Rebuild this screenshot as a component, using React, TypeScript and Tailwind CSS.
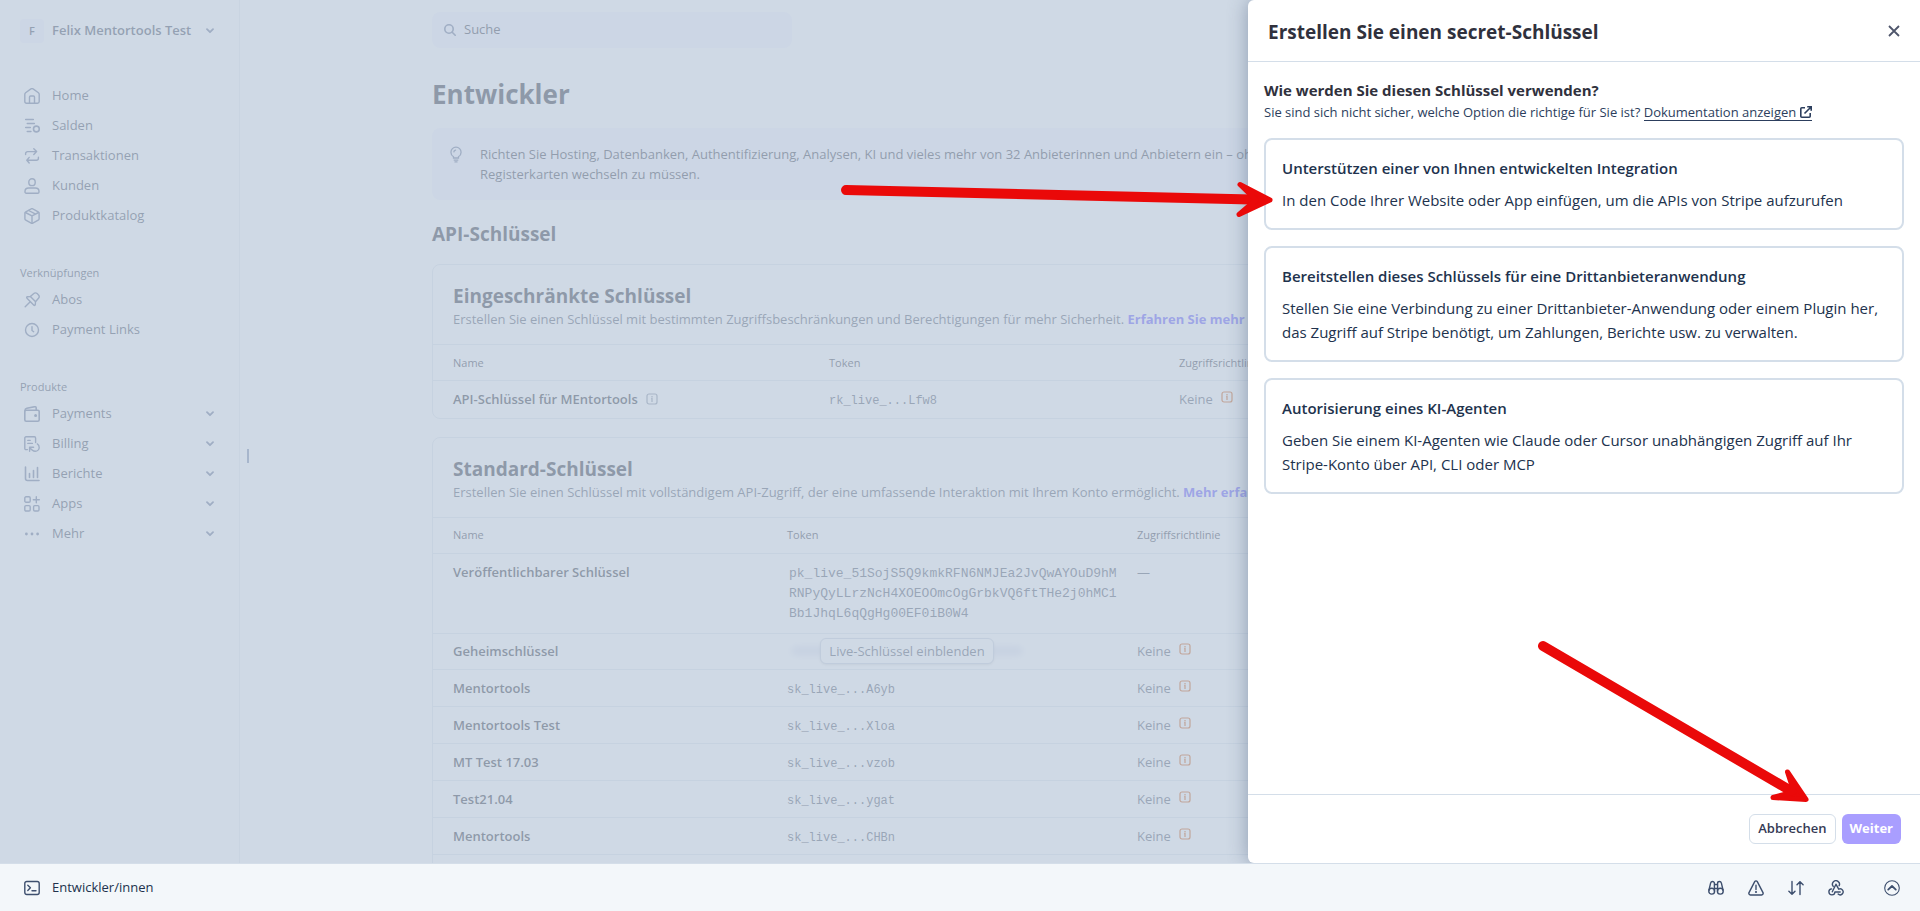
import type { ReactNode } from "react";

const Icon = ({ children, size = 16 }: { children: ReactNode; size?: number }) => (
  <svg
    width={size}
    height={size}
    viewBox="0 0 16 16"
    fill="none"
    stroke="currentColor"
    strokeWidth="1.4"
    strokeLinecap="round"
    strokeLinejoin="round"
    className="shrink-0"
    aria-hidden="true"
  >
    {children}
  </svg>
);

const icons = {
  home: (
    <Icon>
      <path d="M.8 6.2c0-.6.3-1.100.8-1.500L6.900.9c.6-.5 1.600-.5 2.200 0l5.300 3.800c.5.4.8.9.8 1.500v7.300c0 1-.8 1.700-1.700 1.700h-11c-1 0-1.700-.8-1.700-1.700z" />
      <path d="M5.500 15V9c0-.6.4-1 1-1h3c.6 0 1 .4 1 1v6" />
    </Icon>
  ),
  balances: (
    <Icon>
      <path d="M1.700 1.500h7.600M3.300 5.500h7M1.700 9.500h4.600M3.300 13.500h3.600" strokeWidth="1.600" />
      <circle cx="12.400" cy="11" r="2.900" strokeWidth="1.600" />
    </Icon>
  ),
  transactions: (
    <Icon>
      <path d="M9.800.8 12.600 3.600 9.800 6.400M12.400 3.600H3.600c-1.100 0-2 .9-2 2v1" />
      <path d="M5.200 9.400 2.800 12.200l2.400 2.800M3 12.200h9.400c1.100 0 2-.9 2-2v-1" />
    </Icon>
  ),
  customers: (
    <Icon>
      <rect x="4.800" y=".8" width="6.400" height="6.800" rx="3.200" />
      <path d="M1 13.400c0-2.100 1.700-3.400 3.700-3.400h6.600c2 0 3.700 1.300 3.700 3.400v.6c0 .7-.5 1.200-1.200 1.200H2.200c-.7 0-1.200-.5-1.200-1.200z" />
    </Icon>
  ),
  products: (
    <Icon>
      <path d="M7.200.9c.5-.3 1.100-.3 1.600 0l5.400 3c.6.3.9.8.9 1.400v5.400c0 .6-.3 1.100-.9 1.400l-5.400 3c-.5.3-1.100.3-1.600 0l-5.400-3c-.6-.3-.9-.8-.9-1.400V5.300c0-.6.3-1.100.9-1.400z" />
      <path d="M1.400 4.500 8 7.800l6.600-3.300M8 7.800V15M4.600 2.500l6.600 3.400" />
    </Icon>
  ),
  pin: (
    <Icon>
      <path d="M1.200 14.800 6 10M3 6.200l6.900 7c.5.5 1.300.2 1.400-.5l.2-3 3-3.400c.9-1 .9-2.300 0-3.300l-1.400-1.400c-1-1-2.400-.9-3.300 0L6.400 4.600l-3 .2c-.8.100-1 .9-.4 1.400z" />
      <path d="M6.400 4.600l5 5" />
    </Icon>
  ),
  clock: (
    <Icon>
      <circle cx="8" cy="8" r="6.500" />
      <path d="M8 4.600v3.900l1.700 1.200" />
    </Icon>
  ),
  wallet: (
    <Icon>
      <rect x=".8" y="4.200" width="14.400" height="11" rx="1.400" strokeWidth="1.600" />
      <path d="M1 4.400c0-1.100.7-2 1.800-2.200l7.900-1.500c.8-.1 1.500.4 1.500 1.200V4" strokeWidth="1.600" />
      <circle cx="11.600" cy="9.600" r=".8" fill="currentColor" />
    </Icon>
  ),
  billing: (
    <Icon>
      <path d="M3.400 13.600H2c-.7 0-1.200-.5-1.200-1.200V2c0-.7.5-1.200 1.200-1.200h8.400c.7 0 1.200.5 1.200 1.200v4.600M3.800 4.400h2.400M3.800 7.400h4.600" />
      <path d="M5.600 15.200v-4h4M5.800 11.400c1.400 2.400 3.200 3.800 5.400 3.800 2.300 0 4-1.700 4-3.800 0-1.500-.7-2.800-1.900-3.500" />
    </Icon>
  ),
  reports: (
    <Icon>
      <path d="M1.500 1v11.500c0 1.100.9 2 2 2H15M5.500 7.500v4M9.500 4.500v7M13.500 1.500v10" strokeWidth="1.600" />
    </Icon>
  ),
  apps: (
    <Icon>
      <rect x=".8" y=".8" width="5.400" height="5.400" rx="1.200" />
      <rect x=".8" y="9.600" width="5.400" height="5.400" rx="1.200" />
      <rect x="9.600" y="9.600" width="5.400" height="5.400" rx="1.200" />
      <path d="M12.300.8v6M9.300 3.800h6" />
    </Icon>
  ),
  more: (
    <Icon>
      <g fill="currentColor" stroke="none">
        <circle cx="2.400" cy="8" r="1.400" />
        <circle cx="8" cy="8" r="1.400" />
        <circle cx="13.600" cy="8" r="1.400" />
      </g>
    </Icon>
  ),
};

const Chevron = () => (
  <svg width="8" height="6" viewBox="0 0 8 6" fill="none" stroke="currentColor" strokeWidth="1.800" strokeLinecap="round" strokeLinejoin="round" className="text-[#6c7a99]" aria-hidden="true">
    <path d="M1 1.200l3 3 3-3" />
  </svg>
);

const InfoIcon = () => (
  <svg width="12" height="12" viewBox="0 0 12 12" fill="none" stroke="currentColor" aria-hidden="true">
    <rect x="1" y="1" width="10" height="10" rx="2" strokeWidth="1.200" />
    <path d="M6 3v1.400M5.200 5.600H6V9" strokeWidth="1.200" />
  </svg>
);

const NavItem = ({ icon, label, expandable }: { icon: ReactNode; label: string; expandable?: boolean }) => (
  <li>
    <a href="#" className="flex h-[30px] items-center pr-[5px] pl-1">
      <span className="text-[#6c7a99]">{icon}</span>
      <span className="ml-3 flex-1">{label}</span>
      {expandable && <Chevron />}
    </a>
  </li>
);

const Sidebar = () => (
  <aside className="relative w-60 shrink-0 border-r border-[#ebeef1] px-5 pt-[19px] text-[13px] text-[#4a5163]">
    <button type="button" className="flex h-6 w-full items-center pr-[5px]">
      <span className="flex size-6 items-center justify-center rounded bg-[#f5f4fd] text-[11px] font-semibold">F</span>
      <span className="ml-2 flex-1 text-left font-semibold">Felix Mentortools Test</span>
      <Chevron />
    </button>
    <nav>
      <ul className="mt-[38px]">
        <NavItem icon={icons.home} label="Home" />
        <NavItem icon={icons.balances} label="Salden" />
        <NavItem icon={icons.transactions} label="Transaktionen" />
        <NavItem icon={icons.customers} label="Kunden" />
        <NavItem icon={icons.products} label="Produktkatalog" />
      </ul>
      <h2 className="mt-8 mb-0.5 text-[11px] leading-5">Verknüpfungen</h2>
      <ul>
        <NavItem icon={icons.pin} label="Abos" />
        <NavItem icon={icons.clock} label="Payment Links" />
      </ul>
      <h2 className="mt-8 mb-0.5 text-[11px] leading-5">Produkte</h2>
      <ul>
        <NavItem icon={icons.wallet} label="Payments" expandable />
        <NavItem icon={icons.billing} label="Billing" expandable />
        <NavItem icon={icons.reports} label="Berichte" expandable />
        <NavItem icon={icons.apps} label="Apps" expandable />
        <NavItem icon={icons.more} label="Mehr" expandable />
      </ul>
    </nav>
    {/* resize handle */}
    <div className="absolute top-[52%] -right-2.5 h-3.5 w-0.5 bg-[#8391b0]" />
  </aside>
);

const CardHead = ({ title, text, link }: { title: string; text: string; link: string }) => (
  <div className="h-[79px] px-5 pt-[18px]">
    <h3 className="text-[19px] leading-[26px] font-bold text-[#353a44]">{title}</h3>
    <p className="text-[13px] leading-5 whitespace-nowrap text-[#596171]">
      {text}{" "}
      <a href="#" className="font-bold text-[#675dff]">
        {link}
      </a>
    </p>
  </div>
);

const NoPolicy = () => (
  <span className="flex gap-2 text-[#596171]">
    Keine
    <span className="mt-0.5 text-[#d2601a]">
      <InfoIcon />
    </span>
  </span>
);

const secretKeys = [
  { name: "Mentortools", token: "sk_live_...A6yb" },
  { name: "Mentortools Test", token: "sk_live_...Xloa" },
  { name: "MT Test 17.03", token: "sk_live_...vzob" },
  { name: "Test21.04", token: "sk_live_...ygat" },
  { name: "Mentortools", token: "sk_live_...CHBn" },
];

const cardClass = "overflow-hidden rounded-lg border border-[#e3e8ee]";
const headRowClass = "h-9 border-y border-[#e3e8ee] text-left text-[11px] text-[#414552]";
const mono = "pt-1 font-['Liberation_Mono',monospace] text-[12px] text-[#596171]";

const RestrictedKeys = () => (
  <section className={cardClass}>
    <CardHead
      title="Eingeschränkte Schlüssel"
      text="Erstellen Sie einen Schlüssel mit bestimmten Zugriffsbeschränkungen und Berechtigungen für mehr Sicherheit."
      link="Erfahren Sie mehr"
    />
    <table className="w-full table-fixed text-[13px] leading-5">
      <thead>
        <tr className={headRowClass}>
          <th className="w-[396px] pl-5 font-medium">Name</th>
          <th className="w-[350px] font-medium">Token</th>
          <th className="font-medium">Zugriffsrichtlinie</th>
        </tr>
      </thead>
      <tbody>
        <tr className="h-[37px]">
          <td className="pl-5 font-semibold text-[#353a44]">
            <span className="flex items-center gap-2">
              API-Schlüssel für MEntortools
              <span className="text-[#8792a2]">
                <InfoIcon />
              </span>
            </span>
          </td>
          <td className={mono}>rk_live_...Lfw8</td>
          <td>
            <NoPolicy />
          </td>
        </tr>
      </tbody>
    </table>
  </section>
);

const StandardKeys = () => (
  <section className={cardClass}>
    <CardHead
      title="Standard-Schlüssel"
      text="Erstellen Sie einen Schlüssel mit vollständigem API-Zugriff, der eine umfassende Interaktion mit Ihrem Konto ermöglicht."
      link="Mehr erfahren"
    />
    <table className="w-full table-fixed text-[13px] leading-5">
      <thead>
        <tr className={headRowClass}>
          <th className="w-[354px] pl-5 font-medium">Name</th>
          <th className="w-[350px] font-medium">Token</th>
          <th className="font-medium">Zugriffsrichtlinie</th>
        </tr>
      </thead>
      <tbody>
        <tr className="h-20 border-b border-[#e3e8ee] align-top">
          <td className="pt-2 pl-5 font-semibold text-[#353a44]">Veröffentlichbarer Schlüssel</td>
          <td className="pt-2.5 pr-4 pl-0.5 font-['Liberation_Mono',monospace] text-[13px] leading-5 break-all text-[#596171]">
            pk_live_51SojS5Q9kmkRFN6NMJEa2JvQwAYOuD9hMRNPyQyLLrzNcH4XOEOOmcOgGrbkVQ6ftTHe2j0hMC1Bb1JhqL6qQgHg00EF0iB0W4
          </td>
          <td className="pt-2 text-[#596171]">—</td>
        </tr>
        <tr className="h-9 border-b border-[#e3e8ee]">
          <td className="pl-5 font-semibold text-[#353a44]">Geheimschlüssel</td>
          <td>
            <div className="relative flex w-60 justify-center">
              <div className="absolute inset-x-1 inset-y-2 rounded-full bg-[#c4c8e4] opacity-40 blur-[3px]" />
              <button
                type="button"
                className="relative h-[26px] rounded-md border border-[#d0d6e2] bg-white px-2 text-[13px] font-medium whitespace-nowrap text-[#596171] shadow-sm"
              >
                Live-Schlüssel einblenden
              </button>
            </div>
          </td>
          <td>
            <NoPolicy />
          </td>
        </tr>
        {secretKeys.map((key) => (
          <tr key={key.token} className="h-[37px] border-b border-[#e3e8ee]">
            <td className="pl-5 font-semibold text-[#353a44]">{key.name}</td>
            <td className={mono}>{key.token}</td>
            <td>
              <NoPolicy />
            </td>
          </tr>
        ))}
      </tbody>
    </table>
    <div className="h-9" />
  </section>
);

const Content = () => (
  <main className="min-w-0 flex-1">
    <div className="mx-auto max-w-[1296px] pt-3">
      <label className="flex h-9 w-[360px] items-center gap-2 rounded-lg bg-[#f5f5fd] px-3 text-[#6c7a99]">
        <svg width="12" height="12" viewBox="0 0 12 12" fill="none" stroke="currentColor" strokeWidth="1.600" strokeLinecap="round" aria-hidden="true">
          <circle cx="5" cy="5" r="4.200" />
          <path d="M8.200 8.200 11.200 11.200" />
        </svg>
        <input
          type="search"
          aria-label="Suche"
          placeholder="Suche"
          className="flex-1 bg-transparent text-[13px] outline-none placeholder:text-[#414552]"
        />
      </label>
      <h1 className="mt-[26px] text-[26px] leading-10 font-bold text-[#353a44]">Entwickler</h1>
      <div className="mt-[14px] flex gap-[18px] rounded-lg bg-[#f5f5fd] py-4 pr-4 pl-[18px] text-[#414552]">
        <svg width="12" height="17" viewBox="0 0 13 18" fill="none" stroke="currentColor" strokeWidth="1.400" strokeLinecap="round" className="mt-0.5 shrink-0 text-[#6c7a99]" aria-hidden="true">
          <path d="M3.800 11.500C2 10.300 1 8.600 1 6.500A5.500 5.500 0 0 1 6.500 1 5.500 5.500 0 0 1 12 6.500c0 2.100-1 3.800-2.800 5v1.300H3.800zM4.500 15h4M5.400 17h2.200M4.200 6.200c.1-1 .8-1.700 1.800-1.900" />
        </svg>
        <p className="h-10 text-[13px] leading-5">
          Richten Sie Hosting, Datenbanken, Authentifizierung, Analysen, KI und vieles mehr von 32 Anbieterinnen und Anbietern ein – ohne zwischen
          <br />
          Registerkarten wechseln zu müssen.
        </p>
      </div>
      <h2 className="mt-5 text-[19px] leading-7 font-bold text-[#353a44]">API-Schlüssel</h2>
      <div className="mt-4 flex flex-col gap-[18px]">
        <RestrictedKeys />
        <StandardKeys />
      </div>
    </div>
  </main>
);

const options = [
  {
    title: "Unterstützen einer von Ihnen entwickelten Integration",
    text: "In den Code Ihrer Website oder App einfügen, um die APIs von Stripe aufzurufen",
  },
  {
    title: "Bereitstellen dieses Schlüssels für eine Drittanbieteranwendung",
    text: "Stellen Sie eine Verbindung zu einer Drittanbieter-Anwendung oder einem Plugin her, das Zugriff auf Stripe benötigt, um Zahlungen, Berichte usw. zu verwalten.",
  },
  {
    title: "Autorisierung eines KI-Agenten",
    text: "Geben Sie einem KI-Agenten wie Claude oder Cursor unabhängigen Zugriff auf Ihr Stripe-Konto über API, CLI oder MCP",
  },
];

const Arrows = () => (
  <>
    <svg width="436" height="40" viewBox="0 0 436 40" fill="#ea0909" stroke="#ea0909" strokeLinecap="round" strokeLinejoin="round" className="pointer-events-none absolute top-[180px] -left-[408px]" aria-hidden="true">
      <path d="M6 10 412 19.500" strokeWidth="10" />
      <path d="M400 4.500 430 20 399 34.500 416 20z" strokeWidth="5" />
    </svg>
    <svg width="280" height="170" viewBox="0 0 280 170" fill="#ea0909" stroke="#ea0909" strokeLinecap="round" strokeLinejoin="round" className="pointer-events-none absolute right-[105px] bottom-[55px]" aria-hidden="true">
      <path d="M8 8 257 153.500" strokeWidth="10" />
      <path d="M252.500 134 271 161.500 238 159.500 259 154z" strokeWidth="5" />
    </svg>
  </>
);

const Drawer = () => (
  <div role="dialog" aria-labelledby="drawer-title" className="absolute inset-y-0 right-0 flex w-full max-w-2xl flex-col rounded-l-md bg-white shadow-[0_0_20px_rgba(60,80,110,0.45)]">
    <header className="flex h-[62px] items-center justify-between border-b border-[#d4dee9] pr-4 pl-5">
      <h2 id="drawer-title" className="pt-1 text-[19px] font-bold text-[#30313d]">
        Erstellen Sie einen secret-Schlüssel
      </h2>
      <button type="button" aria-label="Schließen" className="p-1 text-[#4f566b]">
        <svg width="12" height="12" viewBox="0 0 12 12" stroke="currentColor" strokeWidth="1.800" aria-hidden="true">
          <path d="M1 1l10 10M11 1 1 11" />
        </svg>
      </button>
    </header>
    <div className="flex-1 px-4 pt-4">
      <h3 className="text-[15px] leading-6 font-bold text-[#30313d]">Wie werden Sie diesen Schlüssel verwenden?</h3>
      <p className="text-[13px] leading-5 text-[#2c3e5d]">
        Sie sind sich nicht sicher, welche Option die richtige für Sie ist?{" "}
        <a href="#" className="inline-flex items-center gap-1 border-b border-current leading-4">
          Dokumentation anzeigen
          <svg width="12" height="12" viewBox="0 0 12 12" fill="none" stroke="currentColor" strokeWidth="1.600" aria-hidden="true">
            <path d="M5 1.800H1.800C1.200 1.800.8 2.200.8 2.800v7.400c0 .6.4 1 1 1h7.400c.6 0 1-.4 1-1V7M7.200.8h4v4M11 1 4.500 7.500" />
          </svg>
        </a>
      </p>
      <div className="mt-4 flex flex-col gap-4">
        {options.map((option) => (
          <button key={option.title} type="button" className="rounded-lg border-2 border-[#d4dee9] p-4 text-left text-[15px] leading-6 text-[#21324d]">
            <span className="mb-2 block font-semibold">{option.title}</span>
            <span className="block">{option.text}</span>
          </button>
        ))}
      </div>
    </div>
    <footer className="flex justify-end gap-1.5 border-t border-[#d4dee9] px-[19px] py-[19px] text-[13px]">
      <button type="button" className="h-[30px] rounded-md border border-[#d4dee9] bg-white px-2 font-semibold text-[#353a54]">
        Abbrechen
      </button>
      <button type="button" className="h-[30px] rounded-md bg-[#a99eff] px-2 font-bold text-white">
        Weiter
      </button>
    </footer>
    <Arrows />
  </div>
);

const DevBar = () => (
  <div className="flex h-12 shrink-0 items-center justify-between border-t border-[#d4dee9] bg-[#f3f7fa] pr-5 pl-6 text-[#3d4f6e]">
    <button type="button" className="flex items-center gap-3">
      <Icon>
        <rect x=".8" y="1.500" width="14.400" height="13" rx="2" />
        <path d="M3.800 5.200 6.400 7.800 3.800 10.400M8 10.800h4" />
      </Icon>
      <span className="text-[13px] text-[#21324d]">Entwickler/innen</span>
    </button>
    <div className="flex items-center gap-6">
      <button type="button" aria-label="Prüfen">
        <Icon>
          <circle cx="3.700" cy="11.200" r="2.900" />
          <circle cx="12.300" cy="11.200" r="2.900" />
          <path d="M1 10 2.600 3.200C2.900 2 3.500 1.500 4.500 1.500S6.400 2.200 6.400 3.200v8M15 10l-1.600-6.800c-.3-1.200-.9-1.700-1.900-1.700s-1.900.7-1.900 1.700v8M6.400 4.500h3.200M6.400 8.500h3.200" />
        </Icon>
      </button>
      <button type="button" aria-label="Fehler">
        <Icon>
          <path d="M6.700 1.600c.6-1 2-1 2.600 0l5.700 11c.5 1.100-.2 2.400-1.400 2.400H2.400C1.200 15 .5 13.700 1 12.600zM8 5.200v4.300" />
          <circle cx="8" cy="12" r=".4" fill="currentColor" />
        </Icon>
      </button>
      <button type="button" aria-label="Ereignisse">
        <Icon>
          <path d="M4 1.500v12.700M.9 11.200 4 14.300l3-3.100M12 14.500V1.800M9 4.800l3-3.100 3.100 3.100" />
        </Icon>
      </button>
      <button type="button" aria-label="Webhooks">
        <Icon>
          <path d="M5.200 6.400a3.500 3.500 0 1 1 5.900-.6M8 4.300l2.700 4.900a3 3 0 1 1-.6 4.900M8 4.300 4.300 11.800M3.600 8.900a3 3 0 1 0 3.300 3.100h5.300" />
        </Icon>
      </button>
      <button type="button" aria-label="Öffnen" className="ml-4">
        <Icon>
          <circle cx="8" cy="8" r="7.300" strokeWidth="1.100" />
          <path d="M4.200 9.600 8 6l3.800 3.600" strokeWidth="1.800" />
        </Icon>
      </button>
    </div>
  </div>
);

const App = () => {
  return (
    <div className="flex h-screen flex-col bg-white font-['Open_Sans',sans-serif]">
      <div className="relative flex min-h-0 flex-1 overflow-hidden">
        <Sidebar />
        <Content />
        <div className="absolute inset-0 bg-[#b8c7d9]/68" />
        <Drawer />
      </div>
      <DevBar />
    </div>
  );
};

export default App;
